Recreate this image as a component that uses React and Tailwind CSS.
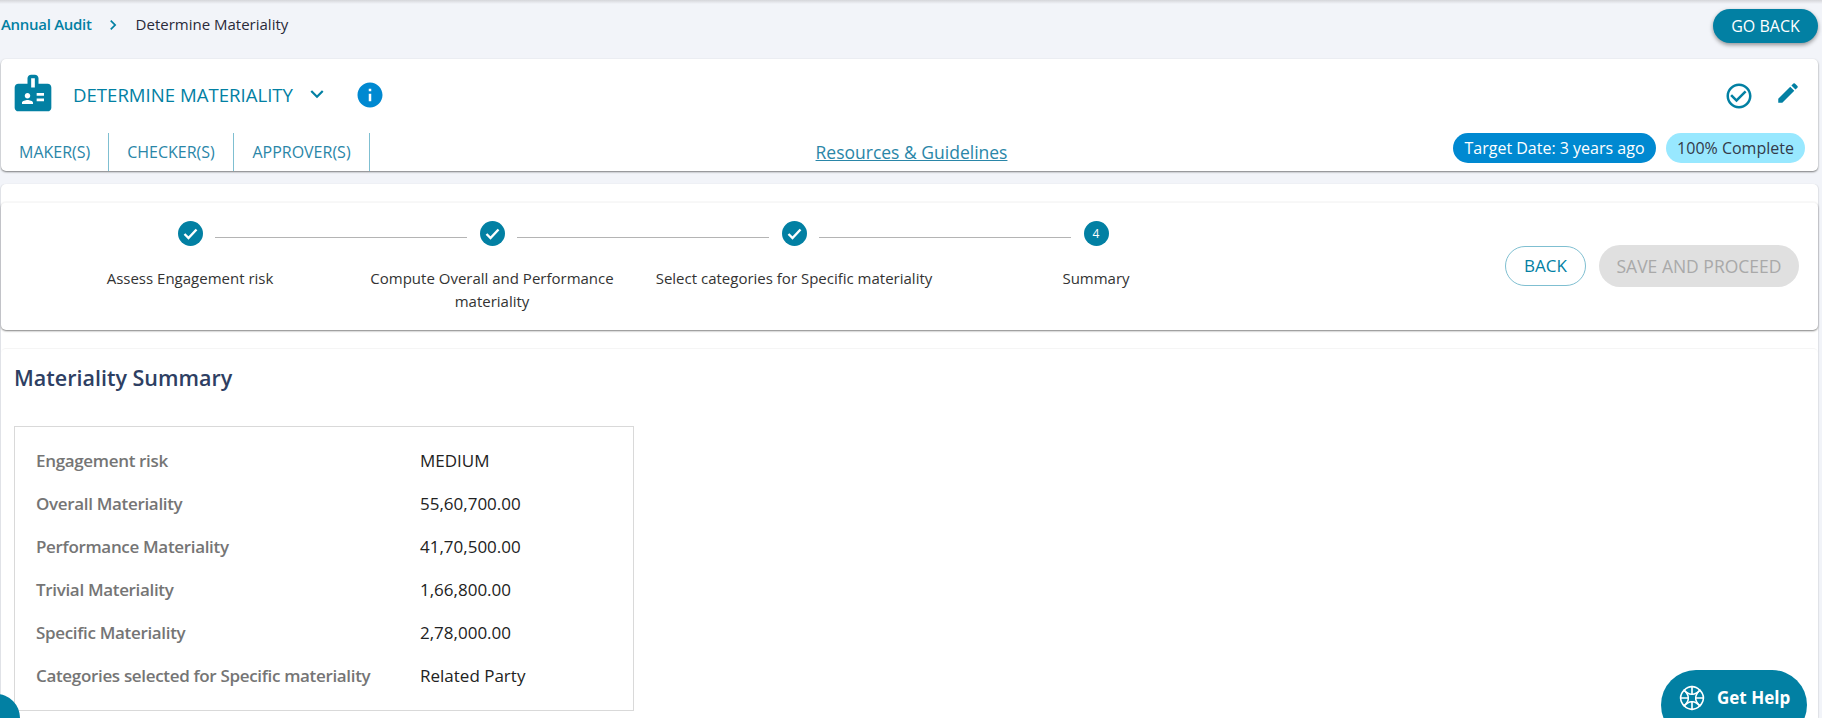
import React from 'react'
import { MdBadge, MdInfo, MdEdit, MdKeyboardArrowDown, MdChevronRight, MdCheckCircleOutline } from 'react-icons/md'

const steps = [
  { label: 'Assess Engagement risk', done: true },
  { label: 'Compute Overall and Performance materiality', done: true },
  { label: 'Select categories for Specific materiality', done: true },
  { label: 'Summary', done: false },
]

const rows = [
  ['Engagement risk', 'MEDIUM'],
  ['Overall Materiality', '55,60,700.00'],
  ['Performance Materiality', '41,70,500.00'],
  ['Trivial Materiality', '1,66,800.00'],
  ['Specific Materiality', '2,78,000.00'],
  ['Categories selected for Specific materiality', 'Related Party'],
]

const GlobeIcon = () => (
  <svg width="26" height="26" viewBox="0 0 24 24" fill="none" stroke="white" strokeWidth="1.500" strokeLinejoin="round" strokeLinecap="round">
    <path d="M12 1.500C15 1.500 17.500 3 19.200 4.800 21 6.500 22.500 9 22.500 12 22.500 15 21 17.500 19.200 19.200 17.500 21 15 22.500 12 22.500 9 22.500 6.500 21 4.800 19.200 3 17.500 1.500 15 1.500 12 1.500 9 3 6.500 4.800 4.800 6.500 3 9 1.500 12 1.500Z" />
    <path d="M4.800 4.800Q9 9 8.500 12Q9 15 4.800 19.200" />
    <path d="M19.200 4.800Q15 9 15.500 12Q15 15 19.200 19.200" />
    <path d="M4.800 4.800Q9 9 12 8.500Q15 9 19.200 4.800" />
    <path d="M4.800 19.200Q9 15 12 15.500Q15 15 19.200 19.200" />
    <path d="M12 1.500V8.500M12 15.500V22.500M1.500 12H8.500M15.500 12H22.500" />
  </svg>
)

const StepCircle = ({ done, number }) => (
  <div className="w-[25px] h-[25px] rounded-full bg-[#0280a3] flex items-center justify-center text-white text-[12px] shrink-0">
    {done ? (
      <svg width="15" height="15" viewBox="0 0 15 15" fill="none" stroke="white" strokeWidth="2.400">
        <path d="M1.500 8l4 4 8-8.500" />
      </svg>
    ) : number}
  </div>
)

const Stepper = () => (
  <div className="flex w-[1208px]">
    {steps.map((step, i) => (
      <div key={step.label} className="w-[302px] flex flex-col items-center">
        <div className="relative w-full flex justify-center pt-[18px]">
          <StepCircle done={step.done} number={i + 1} />
          {i < steps.length - 1 && (
            <div className="absolute left-[176px] top-[34px] w-[252px] h-px bg-[#b4b4b4]" />
          )}
        </div>
        <p className="mt-[21px] w-full text-center text-[15px] leading-[23px] text-[#333333]">{step.label}</p>
      </div>
    ))}
  </div>
)

export default function App() {
  return (
    <div className="relative h-[718px] overflow-hidden bg-[#f2f4f9] font-['Open_Sans',sans-serif]">
      <div className="h-[4px] bg-gradient-to-b from-[#d5d6da] to-[#f2f4f9]" />

      {/* breadcrumb */}
      <div className="flex justify-between h-[55px] pl-[1px] pr-[4px]">
        <div className="flex items-center h-[41px] text-[15px]">
          <span className="font-semibold tracking-[-0.3px] text-[#0280a3]">Annual Audit</span>
          <MdChevronRight size={20} className="ml-[11px] mr-[13px] text-[#0280a3]" />
          <span className="text-[#2a2a3a]">Determine Materiality</span>
        </div>
        <button className="mt-[5px] h-[34px] w-[105px] rounded-full bg-[#0280a3] text-white text-[16px] shadow-[0_2px_4px_rgba(0,0,0,0.4)]">GO BACK</button>
      </div>

      {/* header card */}
      <div className="ml-px mr-[4px] h-[112px] bg-white rounded-[5px] shadow-[0_1px_2px_rgba(0,0,0,0.5)]">
        <div className="flex justify-between items-center h-[74px]">
          <div className="flex items-center text-[#0280a3] pb-[6px]">
            <MdBadge size={44} className="ml-[10px]" />
            <span className="ml-[18px] text-[18.600px] leading-[26px] pt-[3px]">DETERMINE MATERIALITY</span>
            <MdKeyboardArrowDown size={26} className="ml-[11px] mt-[2px]" />
            <MdInfo size={30} className="ml-[25px] mt-[3px] text-[#0089d1]" />
          </div>
          <div className="flex items-center text-[#0280a3] pr-[17px]">
            <MdCheckCircleOutline size={30} />
            <MdEdit size={26} className="ml-[21px] -mt-[6px]" />
          </div>
        </div>
        <div className="grid grid-cols-[1fr_auto_1fr] items-stretch h-[38px]">
          <div className="flex h-full text-[16px] text-[#2a86a8]">
            <div className="w-[108px] pl-[18px] border-r border-[#7fbfd1] flex items-center whitespace-nowrap">MAKER(S)</div>
            <div className="w-[125px] border-r border-[#7fbfd1] flex items-center justify-center whitespace-nowrap">CHECKER(S)</div>
            <div className="w-[136px] border-r border-[#7fbfd1] flex items-center justify-center whitespace-nowrap">APPROVER(S)</div>
          </div>
          <a className="h-full flex items-center ml-[4px] text-[17.500px] text-[#2a86a8] underline">Resources &amp; Guidelines</a>
          <div className="flex items-center justify-end gap-[10px] h-full pb-[8px] pr-[13px]">
            <span className="h-[30px] w-[203px] rounded-full bg-[#0089d1] text-white text-[16px] flex items-center justify-center whitespace-nowrap">Target Date: 3 years ago</span>
            <span className="h-[30px] w-[139px] rounded-full bg-[#98e8ff] text-[#333a4a] text-[16px] flex items-center justify-center whitespace-nowrap">100% Complete</span>
          </div>
        </div>
      </div>

      {/* white body holding the stepper and summary cards */}
      <div className="ml-px mr-[4px] mt-[13px] h-[534px] pt-[18px] bg-white rounded-t-[5px] shadow-[-1px_0_1px_rgba(0,0,0,0.08),1px_0_1px_rgba(0,0,0,0.08)]">
        <div className="h-[128px] flex justify-between rounded-[5px] border-t border-[#f7f7f7] shadow-[0_1px_2px_rgba(0,0,0,0.5)]">
          <div className="pl-[38px]">
            <Stepper />
          </div>
          <div className="flex items-start gap-[13px] pt-[42px] pr-[19px]">
            <button className="mt-px h-[40px] w-[81px] rounded-full border border-[#7fbfd1] text-[#0280a3] text-[17px]">BACK</button>
            <button className="h-[42px] w-[200px] rounded-full bg-[#e0e0e0] text-[#a9a9a9] text-[17.500px] whitespace-nowrap">SAVE AND PROCEED</button>
          </div>
        </div>

        {/* summary card */}
        <div className="mt-[18px] h-[370px] rounded-t-[5px] border-t border-[#f5f5f5] pl-[13px] pt-[14px]">
          <h2 className="text-[21.500px] leading-[30px] font-semibold text-[#2e3f63]">Materiality Summary</h2>
          <div className="mt-[33px] w-[620px] h-[285px] border border-[#d9d9d9] pl-[21px] pt-[12px]">
            {rows.map(([label, value]) => (
              <div key={label} className="flex items-center h-[43px]">
                <span className="w-[384px] text-[17px] font-semibold text-[#757575] whitespace-nowrap tracking-[-0.33px]">{label}</span>
                <span className="text-[17px] text-[#222222]">{value}</span>
              </div>
            ))}
          </div>
        </div>
      </div>

      {/* floating */}
      <div className="absolute left-[-28px] top-[694px] w-[48px] h-[48px] rounded-full bg-[#0280a3]" />
      <div className="absolute left-[1661px] top-[670px] w-[146px] h-[70px] rounded-[35px] bg-[#0280a3] flex items-start pt-[15px] pl-[18px] text-white">
        <GlobeIcon />
        <span className="ml-[12px] text-[17px] font-bold leading-[26px] whitespace-nowrap">Get Help</span>
      </div>
    </div>
  )
}
